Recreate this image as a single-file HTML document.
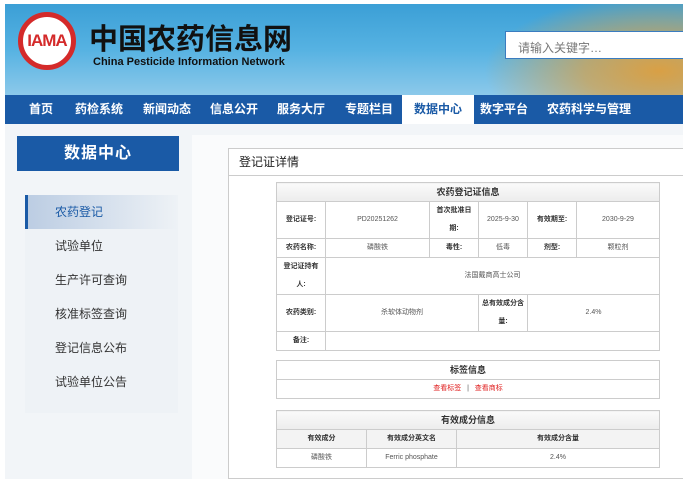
<!DOCTYPE html>
<html><head><meta charset="utf-8"><style>
*{margin:0;padding:0;box-sizing:border-box}
body{width:683px;height:479px;overflow:hidden;background:#fff;font-family:"Liberation Sans","Noto Sans CJK SC",sans-serif;position:relative}
.hdr{position:absolute;left:5px;top:4px;width:678px;height:91px;background:linear-gradient(180deg,#3b9fd6 0%,#56b2e2 50%,#8cc9ea 100%);overflow:hidden}
.wheat{position:absolute;right:-20px;top:-10px;width:220px;height:110px;background:radial-gradient(ellipse at 80% 70%,#d9a045 0%,rgba(217,160,69,.7) 30%,rgba(217,160,69,0) 70%)}
.logo{position:absolute;left:13px;top:8px;width:58px;height:58px;border-radius:50%;border:5px solid #d42a2a;background:#fff;color:#d42a2a;font-weight:bold;font-size:17px;text-align:center;line-height:48px;letter-spacing:-1px}
.t1{position:absolute;left:84px;top:12px;font-size:29px;font-weight:bold;color:#111;letter-spacing:0px}
.t2{position:absolute;left:88px;top:52px;font-size:11px;font-weight:bold;color:#111}
.search{position:absolute;left:500px;top:27px;width:180px;height:28px;background:#fff;border:1px solid #3a7cc0;font-size:12px;color:#777;padding:7px 12px}
.nav{position:absolute;left:5px;top:95px;width:678px;height:29px;background:#1a5aa6}
.nav span{position:absolute;top:0;line-height:29px;color:#fff;font-size:12px;font-weight:bold}
.nav .on{background:#fff;color:#1a5aa6;padding:0 12px}
.bg{position:absolute;left:5px;top:124px;width:678px;height:355px;background:#f2f5f8}
.side{position:absolute;left:17px;top:136px;width:162px;height:35px;background:#1a5aa6;color:#fff;font-size:16px;font-weight:bold;text-align:center;line-height:35px;letter-spacing:1px}
.menu{position:absolute;left:25px;top:195px;width:153px;height:218px;background:#eef2f6}
.menu div{height:34px;line-height:34px;padding-left:30px;font-size:12px;color:#333}
.menu .a{background:linear-gradient(90deg,#bccde3,#eef2f6);border-left:3px solid #1a5aa6;padding-left:27px;color:#1a5aa6}
.main{position:absolute;left:192px;top:135px;width:491px;height:344px;background:#fafbfc}
.box{position:absolute;left:228px;top:148px;width:455px;height:331px;background:#fff;border:1px solid #ccc;border-right:none}
.box h3{font-size:12px;font-weight:normal;color:#222;height:27px;line-height:27px;padding-left:10px;border-bottom:1px solid #ccc}
table{position:absolute;border-collapse:collapse;font-size:7px;color:#555;text-align:center;table-layout:fixed}
td,th{border:1px solid #ccc;line-height:18px}
th{background:linear-gradient(#fafafa,#ececec);font-size:9px;color:#333}
td.b{font-weight:bold;color:#333}
.red{color:#e02020}
</style></head><body>
<div class="hdr"><div class="wheat"></div>
<div class="logo">IAMA</div>
<div class="t1">中国农药信息网</div>
<div class="t2">China Pesticide Information Network</div>
<div class="search">请输入关键字…</div>
</div>
<div class="nav">
<span style="left:24px">首页</span><span style="left:70px">药检系统</span><span style="left:138px">新闻动态</span><span style="left:205px">信息公开</span><span style="left:272px">服务大厅</span><span style="left:340px">专题栏目</span><span class="on" style="left:397px">数据中心</span><span style="left:475px">数字平台</span><span style="left:542px">农药科学与管理</span>
</div>
<div class="bg"></div>
<div class="side">数据中心</div>
<div class="menu"><div class="a">农药登记</div><div>试验单位</div><div>生产许可查询</div><div>核准标签查询</div><div>登记信息公布</div><div>试验单位公告</div></div>
<div class="main"></div>
<div class="box"><h3>登记证详情</h3></div>
<table style="left:276px;top:182px;width:384px">
<col style="width:49px"><col style="width:104px"><col style="width:49px"><col style="width:49px"><col style="width:49px"><col>
<tr style="height:18px"><th colspan="6">农药登记证信息</th></tr>
<tr style="height:37px"><td class="b">登记证号:</td><td>PD20251262</td><td class="b">首次批准日<br>期:</td><td>2025-9-30</td><td class="b">有效期至:</td><td>2030-9-29</td></tr>
<tr style="height:19px"><td class="b">农药名称:</td><td>磷酸铁</td><td class="b">毒性:</td><td>低毒</td><td class="b">剂型:</td><td>颗粒剂</td></tr>
<tr style="height:36px"><td class="b">登记证持有<br>人:</td><td colspan="5">法国戴商高士公司</td></tr>
<tr style="height:37px"><td class="b">农药类别:</td><td colspan="2">杀软体动物剂</td><td class="b">总有效成分含<br>量:</td><td colspan="2">2.4%</td></tr>
<tr style="height:19px"><td class="b">备注:</td><td colspan="5"></td></tr>
</table>
<table style="left:276px;top:360px;width:384px">
<tr style="height:19px"><th style="background:#fff">标签信息</th></tr>
<tr style="height:19px"><td class="red">查看标签 &nbsp; <span style="color:#555">|</span> &nbsp; 查看商标</td></tr>
</table>
<table style="left:276px;top:410px;width:384px">
<col style="width:90px"><col style="width:90px"><col>
<tr style="height:18px"><th colspan="3">有效成分信息</th></tr>
<tr style="height:19px"><td class="b" style="background:#f3f3f3">有效成分</td><td class="b" style="background:#f3f3f3">有效成分英文名</td><td class="b" style="background:#f3f3f3">有效成分含量</td></tr>
<tr style="height:19px"><td>磷酸铁</td><td>Ferric phosphate</td><td>2.4%</td></tr>
</table>
</body></html>
